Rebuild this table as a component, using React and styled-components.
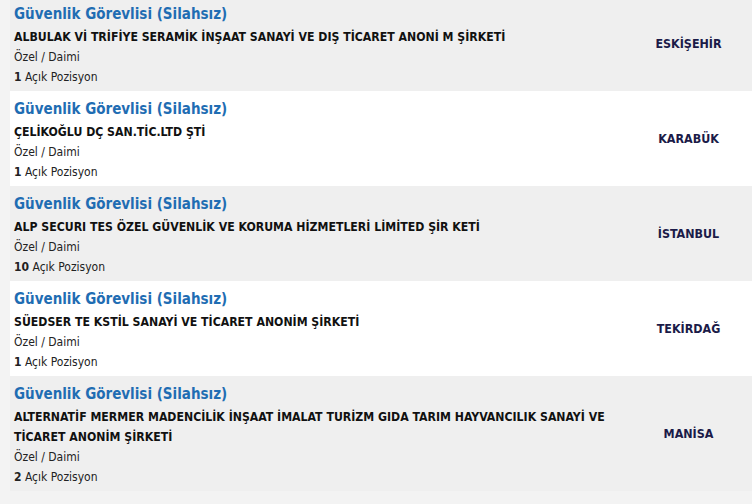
import React from "react";
import styled, { createGlobalStyle } from "styled-components";

const GlobalStyle = createGlobalStyle`
  html, body {
    margin: 0;
    padding: 0;
    background: #f3f3f3;
    overflow: hidden;
  }
  body {
    font-family: "DejaVu Sans Condensed", "DejaVu Sans", Verdana, sans-serif;
  }
`;

const Page = styled.div`
  width: 752px;
  height: 504px;
  overflow: hidden;
  padding-left: 10px;
  box-sizing: border-box;
`;

const List = styled.div`
  margin-top: -4px;
  display: flex;
  flex-direction: column;
`;

const Row = styled.div`
  display: grid;
  grid-template-columns: 1fr 127px;
  align-items: center;
  background: ${(p) => (p.$shaded ? "#efefef" : "#ffffff")};
  padding: 8px 0 4px 4px;
`;

const Info = styled.div`
  display: flex;
  flex-direction: column;
`;

const Title = styled.a`
  font-size: 15px;
  font-weight: bold;
  line-height: 20px;
  color: #1f6db3;
  text-decoration: none;
  margin-bottom: 3px;
`;

const Company = styled.div`
  font-size: 12.2px;
  font-weight: bold;
  line-height: 20px;
  color: #111111;
  padding-right: 4px;
`;

const Meta = styled.div`
  font-size: 12px;
  line-height: 20px;
  color: #222222;

  b {
    font-weight: bold;
  }
`;

const City = styled.div`
  text-align: center;
  font-size: 12.4px;
  font-weight: bold;
  color: #1b1b48;
  margin-bottom: 5px;
`;

const jobs = [
  {
    company: "ALBULAK Vİ TRİFİYE SERAMİK İNŞAAT SANAYİ VE DIŞ TİCARET ANONİ M ŞİRKETİ",
    count: 1,
    city: "ESKİŞEHİR",
  },
  { company: "ÇELİKOĞLU DÇ SAN.TİC.LTD ŞTİ", count: 1, city: "KARABÜK" },
  {
    company: "ALP SECURI TES ÖZEL GÜVENLİK VE KORUMA HİZMETLERİ LİMİTED ŞİR KETİ",
    count: 10,
    city: "İSTANBUL",
  },
  {
    company: "SÜEDSER TE KSTİL SANAYİ VE TİCARET ANONİM ŞİRKETİ",
    count: 1,
    city: "TEKİRDAĞ",
  },
  {
    company:
      "ALTERNATİF MERMER MADENCİLİK İNŞAAT İMALAT TURİZM GIDA TARIM HAYVANCILIK SANAYİ VE TİCARET ANONİM ŞİRKETİ",
    count: 2,
    city: "MANİSA",
  },
];

const App = () => {
  return (
    <Page>
      <GlobalStyle />
      <List>
        {jobs.map((job, i) => (
          <Row key={i} $shaded={i % 2 === 0}>
            <Info>
              <Title href="#">Güvenlik Görevlisi (Silahsız)</Title>
              <Company>{job.company}</Company>
              <Meta>Özel / Daimi</Meta>
              <Meta>
                <b>{job.count}</b> Açık Pozisyon
              </Meta>
            </Info>
            <City>{job.city}</City>
          </Row>
        ))}
      </List>
    </Page>
  );
};

export default App;
